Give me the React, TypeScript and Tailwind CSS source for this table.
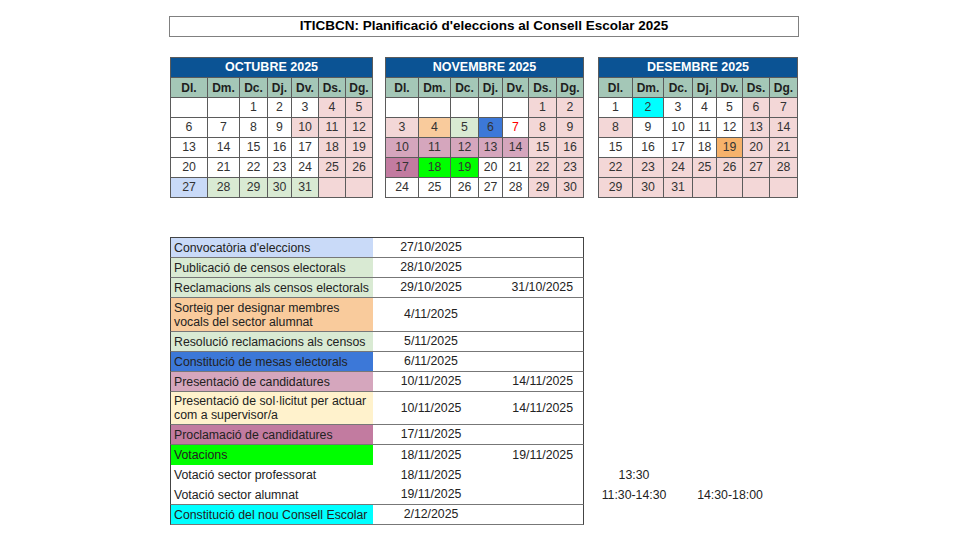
import React from 'react'

// colors taken from the spreadsheet palette
const bg: Record<string, string> = {
    w: 'bg-white',
    p: 'bg-[#f3d7d7]',
    lb: 'bg-[#c9daf8]',
    lg: 'bg-[#d9ead3]',
    o: 'bg-[#f9cb9c]',
    b: 'bg-[#3c78d8]',
    m: 'bg-[#d5a6bd]',
    d: 'bg-[#c27ba0]',
    g: 'bg-[#00ff00]',
    c: 'bg-[#00ffff]',
    or: 'bg-[#f6b26b]',
    y: 'bg-[#fff2cc]',
}

const dayNames = ['Dl.', 'Dm.', 'Dc.', 'Dj.', 'Dv.', 'Ds.', 'Dg.']

const months = [
    {
        name: 'OCTUBRE 2025',
        wrap: 'w-[203px]',
        cols: 'grid-cols-[36px_31px_27px_23px_26px_26px_26px]',
        days: `_:w _:w 1:w 2:w 3:w 4:p 5:p
               6:w 7:w 8:w 9:w 10:p 11:p 12:p
               13:w 14:w 15:w 16:w 17:w 18:p 19:p
               20:w 21:w 22:w 23:w 24:w 25:p 26:p
               27:lb 28:lg 29:lg 30:lg 31:lg _:p _:p`,
    },
    {
        name: 'NOVEMBRE 2025',
        wrap: 'ml-[12px] w-[199px]',
        cols: 'grid-cols-[32px_31px_27px_23px_25px_27px_26px]',
        days: `_:w _:w _:w _:w _:w 1:p 2:p
               3:p 4:o 5:lg 6:b 7:w:r 8:p 9:p
               10:m 11:m 12:m 13:m 14:m 15:p 16:p
               17:d 18:g 19:g 20:w 21:w 22:p 23:p
               24:w 25:w 26:w 27:w 28:w 29:p 30:p`,
    },
    {
        name: 'DESEMBRE 2025',
        wrap: 'ml-[14px] w-[200px]',
        cols: 'grid-cols-[33px_30px_28px_23px_25px_26px_27px]',
        days: `1:w 2:c 3:w 4:w 5:w 6:p 7:p
               8:p 9:w 10:w 11:w 12:w 13:p 14:p
               15:w 16:w 17:w 18:w 19:or 20:p 21:p
               22:p 23:p 24:p 25:p 26:p 27:p 28:p
               29:p 30:p 31:p _:p _:p _:p _:p`,
    },
]

const rows = [
    { label: ['Convocatòria d\'eleccions'], color: 'lb', d1: '27/10/2025', h: 'h-[20px]', line: true },
    { label: ['Publicació de censos electorals'], color: 'lg', d1: '28/10/2025', h: 'h-[20px]', line: true },
    { label: ['Reclamacions als censos electorals'], color: 'lg', d1: '29/10/2025', d2: '31/10/2025', h: 'h-[20px]', line: true },
    { label: ['Sorteig per designar membres', 'vocals del sector alumnat'], color: 'o', d1: '4/11/2025', h: 'h-[34px]', line: true },
    { label: ['Resolució reclamacions als censos'], color: 'lg', d1: '5/11/2025', h: 'h-[20px]', line: true },
    { label: ['Constitució de mesas electorals'], color: 'b', d1: '6/11/2025', h: 'h-[20px]', line: true },
    { label: ['Presentació de candidatures'], color: 'm', d1: '10/11/2025', d2: '14/11/2025', h: 'h-[20px]', line: true },
    { label: ['Presentació de sol·licitut per actuar', 'com a supervisor/a'], color: 'y', d1: '10/11/2025', d2: '14/11/2025', h: 'h-[33px]', line: true },
    { label: ['Proclamació de candidatures'], color: 'd', d1: '17/11/2025', h: 'h-[20px]', line: true },
    { label: ['Votacions'], color: 'g', d1: '18/11/2025', d2: '19/11/2025', h: 'h-[20px]', line: false },
    { label: ['Votació sector professorat'], color: 'w', d1: '18/11/2025', h: 'h-[20px]', line: false, t1: '13:30' },
    { label: ['Votació sector alumnat'], color: 'w', d1: '19/11/2025', h: 'h-[20px]', line: true, t1: '11:30-14:30', t2: '14:30-18:00' },
    { label: ['Constitució del nou Consell Escolar'], color: 'c', d1: '2/12/2025', h: 'h-[20px]', line: true },
]

function Month({ month }: { month: (typeof months)[number] }) {
    const cells = month.days.trim().split(/\s+/).map((c) => c.split(':'))
    return (
        <div className={`${month.wrap} grid ${month.cols} auto-rows-[19px] gap-px bg-[#5b5b5b] p-px`}>
            <div className="col-span-7 flex items-center justify-center bg-[#0b5394] text-[12.5px] font-bold text-white">
                {month.name}
            </div>
            {dayNames.map((d) => (
                <div key={d} className="flex items-center justify-center bg-[#a4c7b7] text-[12px] font-bold text-[#1e1e1e]">
                    {d}
                </div>
            ))}
            {cells.map(([n, c, r], i) => (
                <div
                    key={i}
                    className={`flex items-center justify-center text-[12.3px] ${bg[c]} ${r ? 'text-[#ff0000]' : 'text-[#333]'}`}
                >
                    {n === '_' ? '' : n}
                </div>
            ))}
        </div>
    )
}

export default function App() {
    return (
        <div className="h-[540px] w-[960px] overflow-hidden bg-white pt-[16px] font-['Liberation_Sans',Arial,sans-serif] text-[#222]">
            <div className="ml-[169px] flex h-[21px] w-[630px] items-center justify-center border border-[#808080] text-[13.5px] font-bold text-black">
                ITICBCN: Planificació d'eleccions al Consell Escolar 2025
            </div>

            <div className="ml-[170px] mt-[20px] flex">
                {months.map((m) => (
                    <Month key={m.name} month={m} />
                ))}
            </div>

            <div className="ml-[170px] mt-[39px]">
                <div className="h-px w-[414px] bg-[#444]" />
                {rows.map((row, i) => (
                    <div key={i} className={`flex ${row.h} text-[12.3px]`}>
                        <div className={`flex w-[414px] border-x border-[#444] ${row.line ? 'border-b border-b-[#777]' : ''}`}>
                            <div className={`flex w-[202px] flex-col justify-center pl-[3px] leading-[14px] ${bg[row.color]}`}>
                                {row.label.map((l) => (
                                    <span key={l}>{l}</span>
                                ))}
                            </div>
                            <div className="flex w-[116px] items-center justify-center">{row.d1}</div>
                            <div className="flex flex-1 items-center justify-end pr-[10px]">{row.d2}</div>
                        </div>
                        <div className="flex w-[100px] items-center justify-center">{row.t1}</div>
                        <div className="flex w-[92px] items-center justify-center">{row.t2}</div>
                    </div>
                ))}
            </div>
        </div>
    )
}
